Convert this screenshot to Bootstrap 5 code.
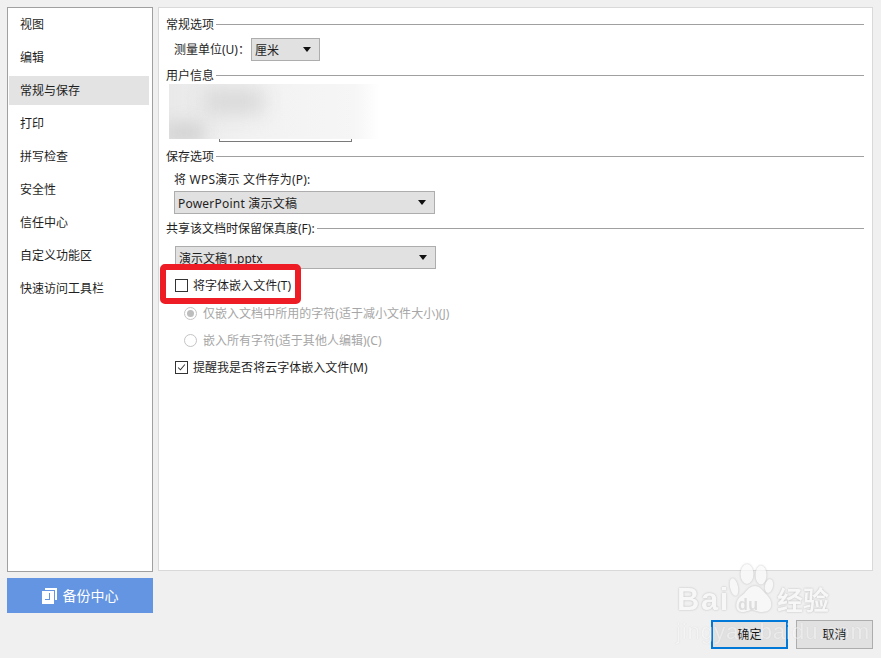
<!DOCTYPE html>
<html lang="zh"><head><meta charset="utf-8"><title>选项</title>
<link rel="stylesheet" href="https://cdn.jsdelivr.net/npm/bootstrap@5.3.0/dist/css/bootstrap.min.css">
<style>
html,body{height:658px;overflow:hidden}
body{background:#f0f0f0;color:#1f1f1f;font:12px/20px Tahoma,"Noto Sans","Noto Sans CJK SC",sans-serif;position:relative}
.shell{padding:7px 8px 0 7px}
.mainrow{height:565px;gap:5px;align-items:flex-start}
.sidepane{width:146px;height:565px;background:#fff;border:1px solid #a0a0a0;padding:1px}
.sideitem{height:29px;line-height:30px;padding-left:11px;margin-bottom:4px;width:140px}
.sideitem.on{background:#e3e3e3}
.sidelist{margin-top:1px}
.contentpane{height:564px;flex:1;background:#fff;border:1px solid #d9d9d9;padding:6px 8px 0 7px}
.hd{height:20px;display:flex;align-items:center;gap:2px}
.hd span{position:relative;top:1px}
.hd::after{content:"";flex:1;height:1px;background:#a0a0a0}
.pick{height:23px;background:#e1e1e1;border:1px solid #adadad;display:flex;align-items:center;justify-content:space-between;padding:0 8px 0 3px}
.pick::after{content:"";border:4px solid transparent;border-top:5px solid #111;border-bottom:0}
.pick span{position:relative;top:1px}
.picksm{width:69px;margin-left:1px}
.picklg{width:261px;margin-left:8px}
.picknext{margin-left:9px}
.spaced{letter-spacing:.22px}
.unitrow{margin-top:4px;margin-left:8px;height:23px}
.infoblock{height:57px;position:relative}
.inputline{position:absolute;left:53px;bottom:0;width:133px;height:8px;border:1px solid #7a7a7a;border-top:0}
.smudge{position:absolute;left:3px;top:-1px;width:211px;height:55px;overflow:hidden;background:linear-gradient(90deg,#e9e9e9 0,#f2f2f2 40%,#f6f6f6 88%,#fff 100%)}
.smudge::before{content:"";position:absolute;left:35px;top:5px;width:60px;height:25px;background:#d8d8d8;filter:blur(10px)}
.smudge::after{content:"";position:absolute;left:-5px;top:38px;width:40px;height:22px;background:#d4d4d4;filter:blur(8px)}
.lbl{height:20px;padding-top:1px}
.opt{height:20px;display:flex;align-items:center;margin-left:9px;gap:5px}
.opt span:last-child{position:relative;top:1px;letter-spacing:.03px}
.box{width:13px;height:13px;border:1px solid #333;background:#fff;display:block;flex:none}
.off{color:#a6a6a6;margin-left:18px;gap:6px}
.dot{width:13px;height:13px;border-radius:50%;border:1px solid #c4c4c4;background:#fff;display:block;flex:none;position:relative}
.dot.sel::after{content:"";position:absolute;inset:2px;border-radius:50%;background:#bdbdbd}
.s1{margin-top:4px}.s2{margin-top:3px}.s3{margin-top:2px}.s4{margin-top:8px}.s5{margin-top:6px}.s6{margin-top:7px}
.redmark{position:absolute;left:160px;top:264px;width:141px;height:40px;border:6px solid #ee1c25;border-radius:5px;pointer-events:none}
.footrow{margin-top:6px;height:71px}
.backup{width:146px;height:35px;background:#6495e2;color:#fff;border:0;border-radius:0;font-size:14px;padding:0;gap:6px}
.actbtn{width:77px;height:29px;background:#e1e1e1;border:1px solid #adadad;border-radius:0;color:#111;font-size:12px;padding:0;line-height:26px}
.actbtn.main{border:2px solid #0078d7;margin-right:0}
.actions{gap:8px;margin-right:-1px;transform:translateX(-1px)}
.wm{position:absolute;left:676px;top:560px;width:190px;height:98px;pointer-events:none;color:#fafafa;opacity:.7}
.wm .bai{position:absolute;left:1px;top:25px;font:bold 31px/30px "Liberation Sans",sans-serif;letter-spacing:1.5px;text-shadow:0 0 2px #999}
.wm .du{position:absolute;left:62px;top:36px;font:bold 16px/18px "Liberation Sans",sans-serif;letter-spacing:.5px;color:#d4d4d4}
.wm .jy{position:absolute;left:101px;top:23px;font:bold 26px/32px "Noto Sans CJK SC",sans-serif;text-shadow:0 0 2px #999}
.wm .url{position:absolute;left:0;top:59px;font:22.5px/26px "Liberation Sans",sans-serif;letter-spacing:.75px;opacity:.6;text-shadow:0 0 1px #aaa}
.wm svg{position:absolute;left:54px;top:4px;overflow:visible;filter:drop-shadow(0 0 1px #aaa)}
</style></head><body>
<div class="shell">
 <div class="d-flex mainrow">
  <div class="sidepane"><div class="sidelist">
   <div class="sideitem">视图</div><div class="sideitem">编辑</div><div class="sideitem on">常规与保存</div><div class="sideitem">打印</div><div class="sideitem">拼写检查</div><div class="sideitem">安全性</div><div class="sideitem">信任中心</div><div class="sideitem">自定义功能区</div><div class="sideitem">快速访问工具栏</div>
  </div></div>
  <div class="contentpane">
   <div class="hd"><span>常规选项</span></div>
   <div class="d-flex align-items-center unitrow"><span>测量单位(U)：</span><div class="pick picksm"><span>厘米</span></div></div>
   <div class="hd s1"><span>用户信息</span></div>
   <div class="infoblock"><div class="inputline"></div><div class="smudge"></div></div>
   <div class="hd s1"><span>保存选项</span></div>
   <div class="lbl s2 ms-2 spaced">将 WPS演示 文件存为(P):</div>
   <div class="pick picklg s3"><span class="spaced">PowerPoint 演示文稿</span></div>
   <div class="hd s1"><span>共享该文档时保留保真度(F):</span></div>
   <div class="pick picklg picknext s4"><span>演示文稿1.pptx</span></div>
   <div class="opt s5"><span class="box"></span><span>将字体嵌入文件(T)</span></div>
   <div class="opt off s4"><span class="dot sel"></span><span>仅嵌入文档中所用的字符(适于减小文件大小)(J)</span></div>
   <div class="opt off s6"><span class="dot"></span><span>嵌入所有字符(适于其他人编辑)(C)</span></div>
   <div class="opt s6"><svg class="box" viewBox="0 0 13 13"><path d="M2.5 6.5 5.2 9.2 10.5 3" fill="none" stroke="#333" stroke-width="1.2"/></svg><span>提醒我是否将云字体嵌入文件(M)</span></div>
  </div>
 </div>
 <div class="d-flex justify-content-between footrow">
  <button class="btn backup d-flex align-items-center justify-content-center" type="button">
   <svg width="15" height="16" viewBox="0 0 15 16"><path fill="#fff" d="M3 0h12v12h-2V2H3z"/><path fill="#fff" fill-rule="evenodd" d="M0 3h12v13H0zM7 5v6H3v1h5V5z"/></svg><span>备份中心</span></button>
  <div class="d-flex actions align-items-end">
   <button class="btn actbtn main" type="button">确定</button>
   <button class="btn actbtn" type="button">取消</button>
  </div>
 </div>
</div>
<div class="redmark"></div>
<div class="wm">
 <svg width="44" height="48" viewBox="0 0 44 48" fill="#fafafa"><ellipse cx="4" cy="23" rx="4" ry="9" transform="rotate(-12 4 23)"/><ellipse cx="17" cy="10" rx="6.5" ry="10"/><ellipse cx="31" cy="11" rx="5.5" ry="9.5"/><ellipse cx="39" cy="22" rx="4" ry="7" transform="rotate(12 39 22)"/><path d="M25 22c5 0 8 5 12 9 6 6 7 17-5 17-5 0-7-2-10-2s-5 2-10 2C4 48 5 36 11 32c5-3 7-10 14-10z"/></svg>
 <span class="bai">Bai</span><span class="du">du</span><span class="jy">经验</span><span class="url">jingyan.baidu.com</span>
</div>
</body></html>
